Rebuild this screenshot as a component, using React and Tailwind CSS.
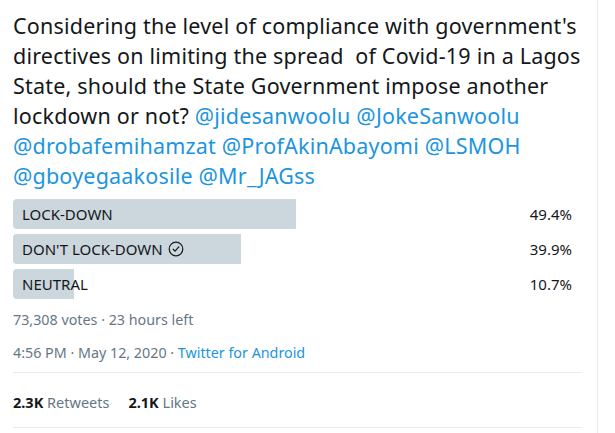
import React from 'react';

const options = [
  { label: 'LOCK-DOWN', pct: 49.4 },
  { label: "DON'T LOCK-DOWN", pct: 39.9, chosen: true },
  { label: 'NEUTRAL', pct: 10.7 },
];

function CheckCircle() {
  return (
    <svg width="16" height="16" viewBox="0 0 24 24" className="ml-[5px] shrink-0">
      <circle cx="12" cy="12" r="10.2" fill="none" stroke="#14171a" strokeWidth="1.8" />
      <path d="M7.8 12.4l2.8 2.9 5.6-6.6" fill="none" stroke="#14171a" strokeWidth="1.8" strokeLinecap="round" strokeLinejoin="round" />
    </svg>
  );
}

export default function App() {
  return (
    <div
      className="w-[598px] h-[433px] bg-white border-r border-[#e6ecf0] overflow-hidden"
      style={{ fontFamily: '"Noto Sans", "Open Sans", sans-serif' }}
    >
      <div className="pl-[13px] w-[585px]">
        {/* tweet text, broken where the original wraps */}
        <p className="pt-[11px] text-[21.5px] tracking-[0.2px] leading-[30px] text-[#14171a] whitespace-nowrap">
          Considering the level of compliance with government's
          <br />
          directives on limiting the spread&nbsp; of Covid-19 in a Lagos
          <br />
          State, should the State Government impose another
          <br />
          lockdown or not? <span className="text-[#1b95e0]">@jidesanwoolu @JokeSanwoolu</span>
          <br />
          <span className="text-[#1b95e0]">@drobafemihamzat @ProfAkinAbayomi @LSMOH</span>
          <br />
          <span className="text-[#1b95e0]">@gboyegaakosile @Mr_JAGss</span>
        </p>

        {/* poll */}
        <div className="mt-[8px] flex flex-col gap-[5px]">
          {options.map((o) => (
            <div key={o.label} className="relative h-[30px] flex items-center">
              <div
                className="absolute left-0 top-0 h-full bg-[#ccd6dd] rounded-l-[4px]"
                style={{ width: `${o.pct}%` }}
              />
              <span className="relative pl-[9px] flex items-center text-[15px] text-[#14171a]">
                {o.label}
                {o.chosen && <CheckCircle />}
              </span>
              <span className="relative ml-auto pr-[13px] text-[15px] text-[#14171a]">{o.pct}%</span>
            </div>
          ))}
        </div>

        <div className="mt-[11px] text-[14.3px] leading-[20px] text-[#657786]">
          73,308 votes · 23 hours left
        </div>

        <div className="mt-[13px] text-[14.3px] leading-[20px] text-[#657786]">
          4:56 PM · May 12, 2020 · <span className="text-[#1b95e0]">Twitter for Android</span>
        </div>

        <div className="mt-[9px] w-[569px] border-t border-[#e6ecf0]" />

        <div className="mt-[19px] flex gap-[19px] text-[14.5px] leading-[20px]">
          <span>
            <span className="font-bold text-[#14171a]">2.3K</span>{' '}
            <span className="text-[#657786]">Retweets</span>
          </span>
          <span>
            <span className="font-bold text-[#14171a]">2.1K</span>{' '}
            <span className="text-[#657786]">Likes</span>
          </span>
        </div>

        <div className="mt-[15px] w-[569px] border-t border-[#e6ecf0]" />
      </div>
    </div>
  );
}
